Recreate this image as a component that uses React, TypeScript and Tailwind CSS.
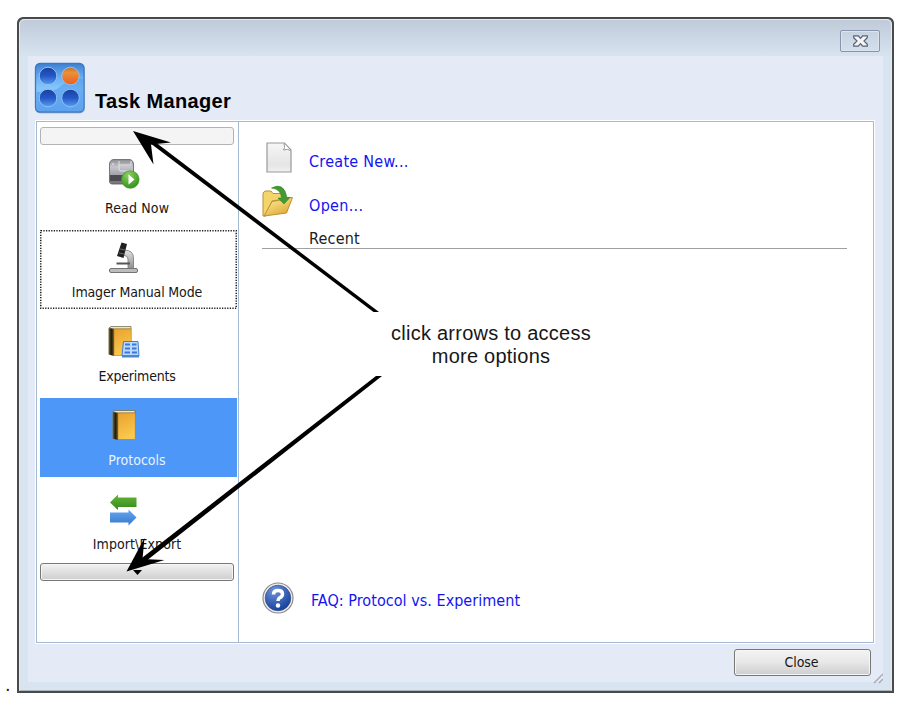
import React from "react";

const ui = "font-['DejaVu_Sans_Condensed','DejaVu_Sans',sans-serif] [font-stretch:condensed]";

function AppLogo() {
  return (
    <svg className="h-[52px] w-[52px] shrink-0" viewBox="0 0 52 52">
      <defs>
        <linearGradient id="lg" x1="0" y1="0" x2="0" y2="1">
          <stop offset="0" stopColor="#3f80d2" />
          <stop offset=".3" stopColor="#6cb0f3" />
          <stop offset=".5" stopColor="#84c6fa" />
          <stop offset="1" stopColor="#6cb0f3" />
        </linearGradient>
        <linearGradient id="dot" x1="0" y1="0" x2="0" y2="1">
          <stop offset="0" stopColor="#1a3f9c" />
          <stop offset=".5" stopColor="#2458c8" />
          <stop offset="1" stopColor="#5b9df0" />
        </linearGradient>
        <linearGradient id="dotO" x1="0" y1="0" x2="0" y2="1">
          <stop offset="0" stopColor="#b8732f" />
          <stop offset=".3" stopColor="#ee9038" />
          <stop offset="1" stopColor="#e95f22" />
        </linearGradient>
      </defs>
      <rect x="1" y="2" width="50" height="49.5" rx="5" fill="#8d9db3" opacity=".6" />
      <rect x="1.5" y="1.5" width="48.5" height="48.5" rx="4.5" fill="url(#lg)" stroke="#3c77c2" strokeWidth="1.3" />
      <path d="M2.500 30Q20 31 27 24Q36 16 49.500 17V46Q49 49 46 49.500H6Q2.500 49 2.500 46Z" fill="#4d94ea" opacity=".5" />
      <g stroke="#8ac2f5" strokeWidth="1">
        <circle cx="14" cy="14" r="8.8" fill="url(#dot)" />
        <circle cx="36.500" cy="14" r="8.800" fill="url(#dotO)" />
        <circle cx="14" cy="36" r="8.8" fill="url(#dot)" />
        <circle cx="36.500" cy="36" r="8.800" fill="url(#dot)" />
      </g>
    </svg>
  );
}

function ReaderIcon() {
  return (
    <svg className="h-8 w-8" viewBox="0 0 32 32">
      <defs>
        <linearGradient id="rd" x1="0" y1="0" x2="0" y2="1">
          <stop offset="0" stopColor="#8c8c90" />
          <stop offset=".3" stopColor="#c6c7cc" />
          <stop offset=".6" stopColor="#a4a5aa" />
        </linearGradient>
        <radialGradient id="gr" cx=".4" cy=".25" r=".8">
          <stop offset="0" stopColor="#8ed063" />
          <stop offset="1" stopColor="#2e8f16" />
        </radialGradient>
      </defs>
      <path d="M1.500 24V6Q2 1.500 6 1.500H21Q25 1.500 25.500 6V24Q25 26 23 26H4Q2 26 1.500 24Z" fill="url(#rd)" stroke="#77777b" />
      <path d="M2 17H25V24Q25 25.500 23 25.500H4Q2 25.500 2 24Z" fill="#4b4b51" />
      <path d="M2 24H25" stroke="#aaa" />
      <path d="M11 3V11Q11 13 13 13H25M11 7H23V3" fill="none" stroke="#e2e2e5" />
      <path d="M4 6h2" stroke="#eee" />
      <circle cx="22.300" cy="21.500" r="8.800" fill="url(#gr)" stroke="#429827" strokeWidth=".7" />
      <path d="M20.500 16.500L26.500 21.500L20.500 26.500Z" fill="#fff" />
    </svg>
  );
}

function MicroscopeIcon() {
  return (
    <svg className="h-8 w-8" viewBox="0 0 32 32">
      <defs>
        <linearGradient id="ms" x1="0" y1="0" x2="0" y2="1">
          <stop offset="0" stopColor="#e4e4e4" />
          <stop offset="1" stopColor="#8c8c8c" />
        </linearGradient>
      </defs>
      <path d="M16 8Q26 8 25.500 17V27H20V18Q20 13 14.500 13.500Z" fill="url(#ms)" stroke="#777" strokeWidth=".8" />
      <path d="M8.500 21.500H22" stroke="#555" strokeWidth="2" />
      <rect x="1.500" y="26.500" width="28" height="4" rx="1.500" fill="#bcbcbc" stroke="#747474" />
      <path d="M13.500 .500L19 2L15.500 16L9 14Z" fill="#202020" />
      <path d="M12 7L17 8M11 11L16 12" stroke="#777" strokeWidth=".8" />
    </svg>
  );
}

function BookIcon({ grid }: { grid?: boolean }) {
  return (
    <svg className="h-8 w-8" viewBox="0 0 32 32">
      <defs>
        <linearGradient id="bk" x1="0" y1="0" x2=".3" y2="1">
          <stop offset="0" stopColor="#eaa12f" />
          <stop offset="1" stopColor="#fac94c" />
        </linearGradient>
        <linearGradient id="sp">
          <stop offset="0" stopColor="#81713a" />
          <stop offset=".5" stopColor="#1e1b0e" />
          <stop offset="1" stopColor="#66541b" />
        </linearGradient>
      </defs>
      <g transform={grid ? "" : "translate(4 0)"}>
        <path d="M1 2L3 .500H23V3H6Z" fill="#eee6bd" stroke="#6c6443" strokeWidth=".7" />
        <path d="M.500 2L6 3V30L.500 28.500Z" fill="url(#sp)" />
        <rect x="6" y="3" width="17.200" height="26.500" fill="url(#bk)" stroke="#aa7c24" strokeWidth=".6" />
      </g>
      {grid && (
        <g>
          <path d="M15.500 15.500H30L31 30H14Z" fill="#b9daff" stroke="#417dc9" />
          <path d="M14 29H31V31.500H14Z" fill="#4b87cf" />
          <path
            d="M17 17.500h5v2h-5zM24 17.500h4.500v2H24zM17 21.500h5v2h-5zM24 21.500h4.500v2H24zM16.500 25.500H22v2h-5.500zM24 25.500h5v2h-5z"
            fill="#3e76dc"
          />
        </g>
      )}
    </svg>
  );
}

function TransferIcon() {
  return (
    <svg className="h-8 w-8" viewBox="0 0 32 32">
      <defs>
        <linearGradient id="ga" x1="0" y1="0" x2="0" y2="1">
          <stop offset="0" stopColor="#64b83a" />
          <stop offset="1" stopColor="#358719" />
        </linearGradient>
        <linearGradient id="ba" x1="0" y1="0" x2="0" y2="1">
          <stop offset="0" stopColor="#65a8f3" />
          <stop offset="1" stopColor="#3977cb" />
        </linearGradient>
      </defs>
      <path d="M2 8.500L10 .500V3.500H28.500V13H10V16Z" fill="url(#ga)" />
      <path d="M28.500 23.500L20.500 15.500V18.500H2V28.500H20.500V31.500Z" fill="url(#ba)" />
    </svg>
  );
}

function PageIcon() {
  return (
    <svg className="h-8 w-[26px]" viewBox="0 0 26 32">
      <defs>
        <linearGradient id="pg" x1="0" y1="0" x2="0" y2="1">
          <stop offset="0" stopColor="#f6f6f6" />
          <stop offset=".75" stopColor="#e5e5e5" />
          <stop offset="1" stopColor="#f1f1f1" />
        </linearGradient>
      </defs>
      <path d="M1 1H18.500L25 8V30H1Z" fill="url(#pg)" stroke="#999" strokeWidth="1.200" />
      <path d="M18 1.500Q19.500 6 17.500 8Q22 6.500 24.500 8.500" fill="#fff" stroke="#999" />
    </svg>
  );
}

function FolderIcon() {
  return (
    <svg className="h-8 w-8" viewBox="0 0 32 32">
      <defs>
        <linearGradient id="fo" x1="0" y1="0" x2=".7" y2="1">
          <stop offset="0" stopColor="#fff0a0" />
          <stop offset="1" stopColor="#dfaa35" />
        </linearGradient>
      </defs>
      <path d="M1 31V8L3 6H9L11 8.500H22V14L10 16L4 31Z" fill="#f3d56c" stroke="#bd8f31" />
      <path d="M2 31L10 16.500L19 15L22 12.500H30.500L24.500 28Z" fill="url(#fo)" stroke="#bd8f31" />
      <path d="M9.500 3Q22-3.500 25 12.500H28L22 19L16 13H19.500Q19 4 9.500 3Z" fill="#439a31" stroke="#37862b" strokeWidth=".6" />
    </svg>
  );
}

function HelpIcon() {
  return (
    <svg className="h-8 w-8" viewBox="0 0 32 32">
      <defs>
        <radialGradient id="hp" cx=".35" cy=".2" r=".8">
          <stop offset="0" stopColor="#7093d8" />
          <stop offset="1" stopColor="#17429f" />
        </radialGradient>
      </defs>
      <circle cx="16" cy="16" r="15" fill="#eee" stroke="#8b8b8b" strokeWidth="1.200" />
      <circle cx="16" cy="16" r="12.800" fill="url(#hp)" stroke="#314e85" strokeWidth=".7" />
      <path d="M11.500 12.500Q11.500 8.500 16 8.500Q20.500 8.500 20.500 12Q20.500 14.300 18 15.600Q16 16.800 16 19" fill="none" stroke="#fff" strokeWidth="3.500" />
      <circle cx="16" cy="23.500" r="2.200" fill="#fff" />
    </svg>
  );
}

function NavItem({ icon, label, spacing, state }: { icon: React.ReactNode; label: string; spacing: string; state?: "focus" | "active" }) {
  const look = state === "active" ? "bg-[#4c97f7] text-[#e9f3ff]" : "text-[#171717]";
  return (
    <div className={`relative flex h-[79px] w-[197px] flex-col items-center pt-[12px] ${look}`}>
      {state === "focus" && (
        <svg className="absolute inset-0 h-full w-full">
          <rect x=".750" y=".750" width="195.500" height="77.500" fill="none" stroke="#222" strokeWidth="1.500" strokeDasharray="1.300 1.300" />
        </svg>
      )}
      <div className="-ml-7 h-8">{icon}</div>
      <div className={`mt-[9px] -ml-[2px] text-[14px] leading-[18px] whitespace-nowrap ${spacing}`}>{label}</div>
    </div>
  );
}

export default function App() {
  return (
    <div className={`relative h-[702px] w-[924px] overflow-hidden bg-white pt-[17px] pl-[17px] ${ui}`}>
      <div className="flex h-[676px] w-[877px] flex-col rounded-t-[6px] border-2 border-[#4a4a4a] bg-[#4a4a4a]">
        <div className="flex min-h-0 flex-1 flex-col rounded-t-[5px] border border-[#e2eaf2] border-b-[#adb5bf] bg-[#d8e4f0] px-2 pb-2">
          <header className="-mx-2 flex h-[36px] shrink-0 items-start justify-end rounded-t-[5px] bg-linear-to-b from-[#bfcbd9] to-[#d7e3ef] pt-[10px] pr-[11px]">
            <button className="flex h-[22px] w-10 items-center justify-center rounded-[2px] border border-[#8795b0] shadow-[inset_0_0_0_1px_#dbe5f0]">
              <svg className="h-3 w-[15px]" viewBox="0 0 15 12">
                <path d="M.700 .800H5.300L7.500 3.300L9.700 .800H14.300V2.800L11 6L14.300 9.200V11.200H9.700L7.500 8.700L5.300 11.200H.700V9.200L4 6L.700 2.800Z" fill="#f5f5f2" stroke="#55617a" strokeWidth="1.200" />
              </svg>
            </button>
          </header>
          <main className="flex min-h-0 flex-1 flex-col bg-[#e4ebf6] px-2">
            <div className="-ml-[2px] flex h-[64px] shrink-0 pt-[6px]">
              <AppLogo />
              <h1 className="mt-[27px] ml-[9px] font-['Liberation_Sans',sans-serif] text-[20px] leading-[24px] font-bold tracking-[0.36px] whitespace-nowrap text-black">
                Task Manager
              </h1>
            </div>
            <section className="-ml-[1px] flex h-[524px] w-[840px] shrink-0 border border-white">
              <div className="flex flex-1 border border-[#a4b9d2] bg-white">
                <nav className="flex w-[202px] shrink-0 flex-col items-center border-r border-[#a4b9d2] pt-[5px] pl-px">
                  <div className="h-[18px] w-[194px] shrink-0 -translate-x-px rounded-[3px] border border-[#b0b4b7] bg-[#f4f4f4]" />
                  <div className="mt-[1px] flex h-[417px] flex-col gap-[5px]">
                    <NavItem icon={<ReaderIcon />} label="Read Now" spacing="tracking-[0.15px]" />
                    <NavItem icon={<MicroscopeIcon />} label="Imager Manual Mode" spacing="tracking-[-0.13px]" state="focus" />
                    <NavItem icon={<BookIcon grid />} label="Experiments" spacing="tracking-[-0.2px]" />
                    <NavItem icon={<BookIcon />} label="Protocols" spacing="tracking-[0px]" state="active" />
                    <NavItem icon={<TransferIcon />} label={"Import\\Export"} spacing="tracking-[0.1px]" />
                  </div>
                  <button className="flex h-[18px] w-[194px] shrink-0 -translate-x-px items-center justify-center rounded-[3px] border border-[#777] bg-linear-to-b from-[#f2f2f2] to-[#cecece] shadow-[inset_0_0_0_1px_#f5f5f5]">
                    <svg className="h-[5px] w-[9px]" viewBox="0 0 9 5"><path d="M0 0H9L4.500 5Z" /></svg>
                  </button>
                </nav>
                <div className="flex flex-1 flex-col pl-[23px] text-[16px] text-[#1414f2]">
                  <div className="mt-[20px] flex h-8 items-center pl-1">
                    <PageIcon />
                    <a className="mt-[7px] ml-[17px] tracking-[0.28px]">Create New...</a>
                  </div>
                  <div className="mt-[11px] flex h-8 items-center">
                    <FolderIcon />
                    <a className="mt-[9px] ml-[15px] tracking-[0.3px]">Open...</a>
                  </div>
                  <div className="mt-[11px] h-[21px] w-[585px] border-b border-[#a0a0a0] pl-[47px] leading-[21px] tracking-[0.2px] text-[#202020]">Recent</div>
                  <div className="mt-[333px] flex h-8 items-center">
                    <HelpIcon />
                    <a className="mt-[5px] ml-[17px] tracking-[0.04px]">FAQ: Protocol vs. Experiment</a>
                  </div>
                </div>
              </div>
            </section>
            <footer className="flex flex-1 items-start justify-end pt-[5px]">
              <button className="mr-[2px] h-[27px] w-[137px] rounded-[3px] border border-[#777] bg-linear-to-b from-[#f3f3f3] from-0% via-[#e8e8e8] via-48% to-[#cdcdcd] pr-[2px] text-[14px] tracking-[-0.1px] text-[#171717] shadow-[inset_0_0_0_1px_#f6f6f6]">
                Close
              </button>
              <svg className="mt-[24px] -mr-[8px] h-[11px] w-[10px] shrink-0" viewBox="0 0 10 11">
                <path d="M1 10L10 1M6 10L10 6" stroke="#a9acb2" strokeWidth="1.500" />
              </svg>
            </footer>
          </main>
        </div>
      </div>
      <span className="absolute top-[674px] left-[5px] font-['Liberation_Sans',sans-serif] text-[20px] leading-[20px] text-[#28203c]">.</span>
      <svg className="pointer-events-none absolute inset-0 h-full w-full" viewBox="0 0 924 702">
        <path d="M148 141.500L150.500 138.500L379 312H373.500Z" />
        <path d="M133 131L171 142.500L151 144.500L153.500 164.500Z" />
        <path d="M138 561L141 565L382 376H376Z" />
        <path d="M126.500 571.500L144.500 538L142.500 559L164.500 560Z" />
      </svg>
      <p className="absolute top-[322px] left-[380px] w-[222px] text-center font-['Liberation_Sans',sans-serif] text-[20px] leading-[23px] tracking-[0.24px] text-[#171717]">
        click arrows to access more options
      </p>
    </div>
  );
}
